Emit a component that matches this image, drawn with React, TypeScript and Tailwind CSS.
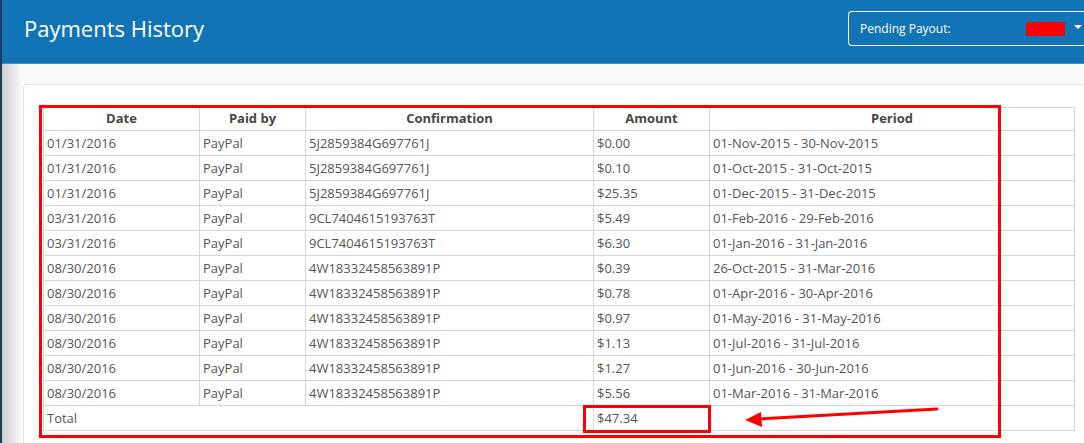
import React from 'react';

type Payment = {
  date: string;
  paidBy: string;
  confirmation: string;
  amount: string;
  period: string;
};

const payments: Payment[] = [
  { date: '01/31/2016', paidBy: 'PayPal', confirmation: '5J2859384G697761J', amount: '$0.00', period: '01-Nov-2015 - 30-Nov-2015' },
  { date: '01/31/2016', paidBy: 'PayPal', confirmation: '5J2859384G697761J', amount: '$0.10', period: '01-Oct-2015 - 31-Oct-2015' },
  { date: '01/31/2016', paidBy: 'PayPal', confirmation: '5J2859384G697761J', amount: '$25.35', period: '01-Dec-2015 - 31-Dec-2015' },
  { date: '03/31/2016', paidBy: 'PayPal', confirmation: '9CL7404615193763T', amount: '$5.49', period: '01-Feb-2016 - 29-Feb-2016' },
  { date: '03/31/2016', paidBy: 'PayPal', confirmation: '9CL7404615193763T', amount: '$6.30', period: '01-Jan-2016 - 31-Jan-2016' },
  { date: '08/30/2016', paidBy: 'PayPal', confirmation: '4W18332458563891P', amount: '$0.39', period: '26-Oct-2015 - 31-Mar-2016' },
  { date: '08/30/2016', paidBy: 'PayPal', confirmation: '4W18332458563891P', amount: '$0.78', period: '01-Apr-2016 - 30-Apr-2016' },
  { date: '08/30/2016', paidBy: 'PayPal', confirmation: '4W18332458563891P', amount: '$0.97', period: '01-May-2016 - 31-May-2016' },
  { date: '08/30/2016', paidBy: 'PayPal', confirmation: '4W18332458563891P', amount: '$1.13', period: '01-Jul-2016 - 31-Jul-2016' },
  { date: '08/30/2016', paidBy: 'PayPal', confirmation: '4W18332458563891P', amount: '$1.27', period: '01-Jun-2016 - 30-Jun-2016' },
  { date: '08/30/2016', paidBy: 'PayPal', confirmation: '4W18332458563891P', amount: '$5.56', period: '01-Mar-2016 - 31-Mar-2016' },
];

const th = 'border border-[#cfd8e2] h-[23px] p-0 text-center font-bold text-[13px] text-[#474747]';
const td = 'border border-[#cfd8e2] h-[25px] pt-[2px] pb-0 px-[3px] text-left text-[13px] text-[#555]';

export default function App() {
  return (
    <div className="relative w-[1084px] h-[443px] overflow-hidden flex bg-white font-['Open_Sans',sans-serif]">
      <div className="w-[2px] shrink-0 bg-[#1d3a60]" />
      <div className="flex-1 flex flex-col min-w-0">
        {/* header */}
        <div className="h-[64px] shrink-0 bg-[#1273b7] border-b border-[#3a8ccb] flex items-start justify-between">
          <h1 className="mt-[13px] ml-[22px] text-[22px] leading-[30px] text-white font-normal">Payments History</h1>
          <div className="mt-[11px] w-[250px] h-[35px] -mr-[14px] border border-white border-r-0 rounded-l-[4px] flex items-center pl-[11px]">
            <span className="text-[12px] text-white">Pending Payout:</span>
            <span className="ml-[75px] w-[39px] h-[14px] bg-[#ff0000] rounded-[2px]" />
            <span className="ml-[9px] w-0 h-0 border-l-[4px] border-r-[4px] border-t-[4px] border-l-transparent border-r-transparent border-t-white -mt-[4px]" />
          </div>
        </div>

        {/* content */}
        <div className="relative flex-1 bg-[#fafafa] pt-[20px] pl-[21px]">
          <div className="absolute left-0 top-0 bottom-0 w-[20px] bg-gradient-to-r from-[#cfcfcf] to-transparent" />
          <div className="relative h-full bg-white border-t border-l border-[#e4e4e4] rounded-tl-[5px] pt-[22px] pl-[19px]">
            <table className="table-fixed border-collapse w-[1031px]">
              <colgroup>
                <col className="w-[156px]" />
                <col className="w-[106px]" />
                <col className="w-[288px]" />
                <col className="w-[116px]" />
                <col className="w-[365px]" />
              </colgroup>
              <thead>
                <tr>
                  <th className={th}>Date</th>
                  <th className={th}>Paid by</th>
                  <th className={th}>Confirmation</th>
                  <th className={th}>Amount</th>
                  <th className={th}>Period</th>
                </tr>
              </thead>
              <tbody>
                {payments.map((p, i) => (
                  <tr key={i}>
                    <td className={td}>{p.date}</td>
                    <td className={td}>{p.paidBy}</td>
                    <td className={td}>{p.confirmation}</td>
                    <td className={td}>{p.amount}</td>
                    <td className={td}>{p.period}</td>
                  </tr>
                ))}
                <tr>
                  <td className={td} colSpan={3}>Total</td>
                  <td className={td}>$47.34</td>
                  <td className={td}></td>
                </tr>
              </tbody>
            </table>
          </div>
        </div>
      </div>

      {/* annotations drawn over the screenshot */}
      <div className="absolute left-[39px] top-[105px] w-[962px] h-[333px] border-[3px] border-[#ff0000] pointer-events-none" />
      <div className="absolute left-[583px] top-[405px] w-[128px] h-[28px] border-[3px] border-[#ff0000] pointer-events-none" />
      <svg className="absolute left-0 top-0 pointer-events-none" width="1084" height="443">
        <line x1="937" y1="409" x2="758" y2="419" stroke="#ff0000" strokeWidth="3" strokeLinecap="round" />
        <polygon points="745,420 761,412 762,427" fill="#ff0000" />
      </svg>
    </div>
  );
}
